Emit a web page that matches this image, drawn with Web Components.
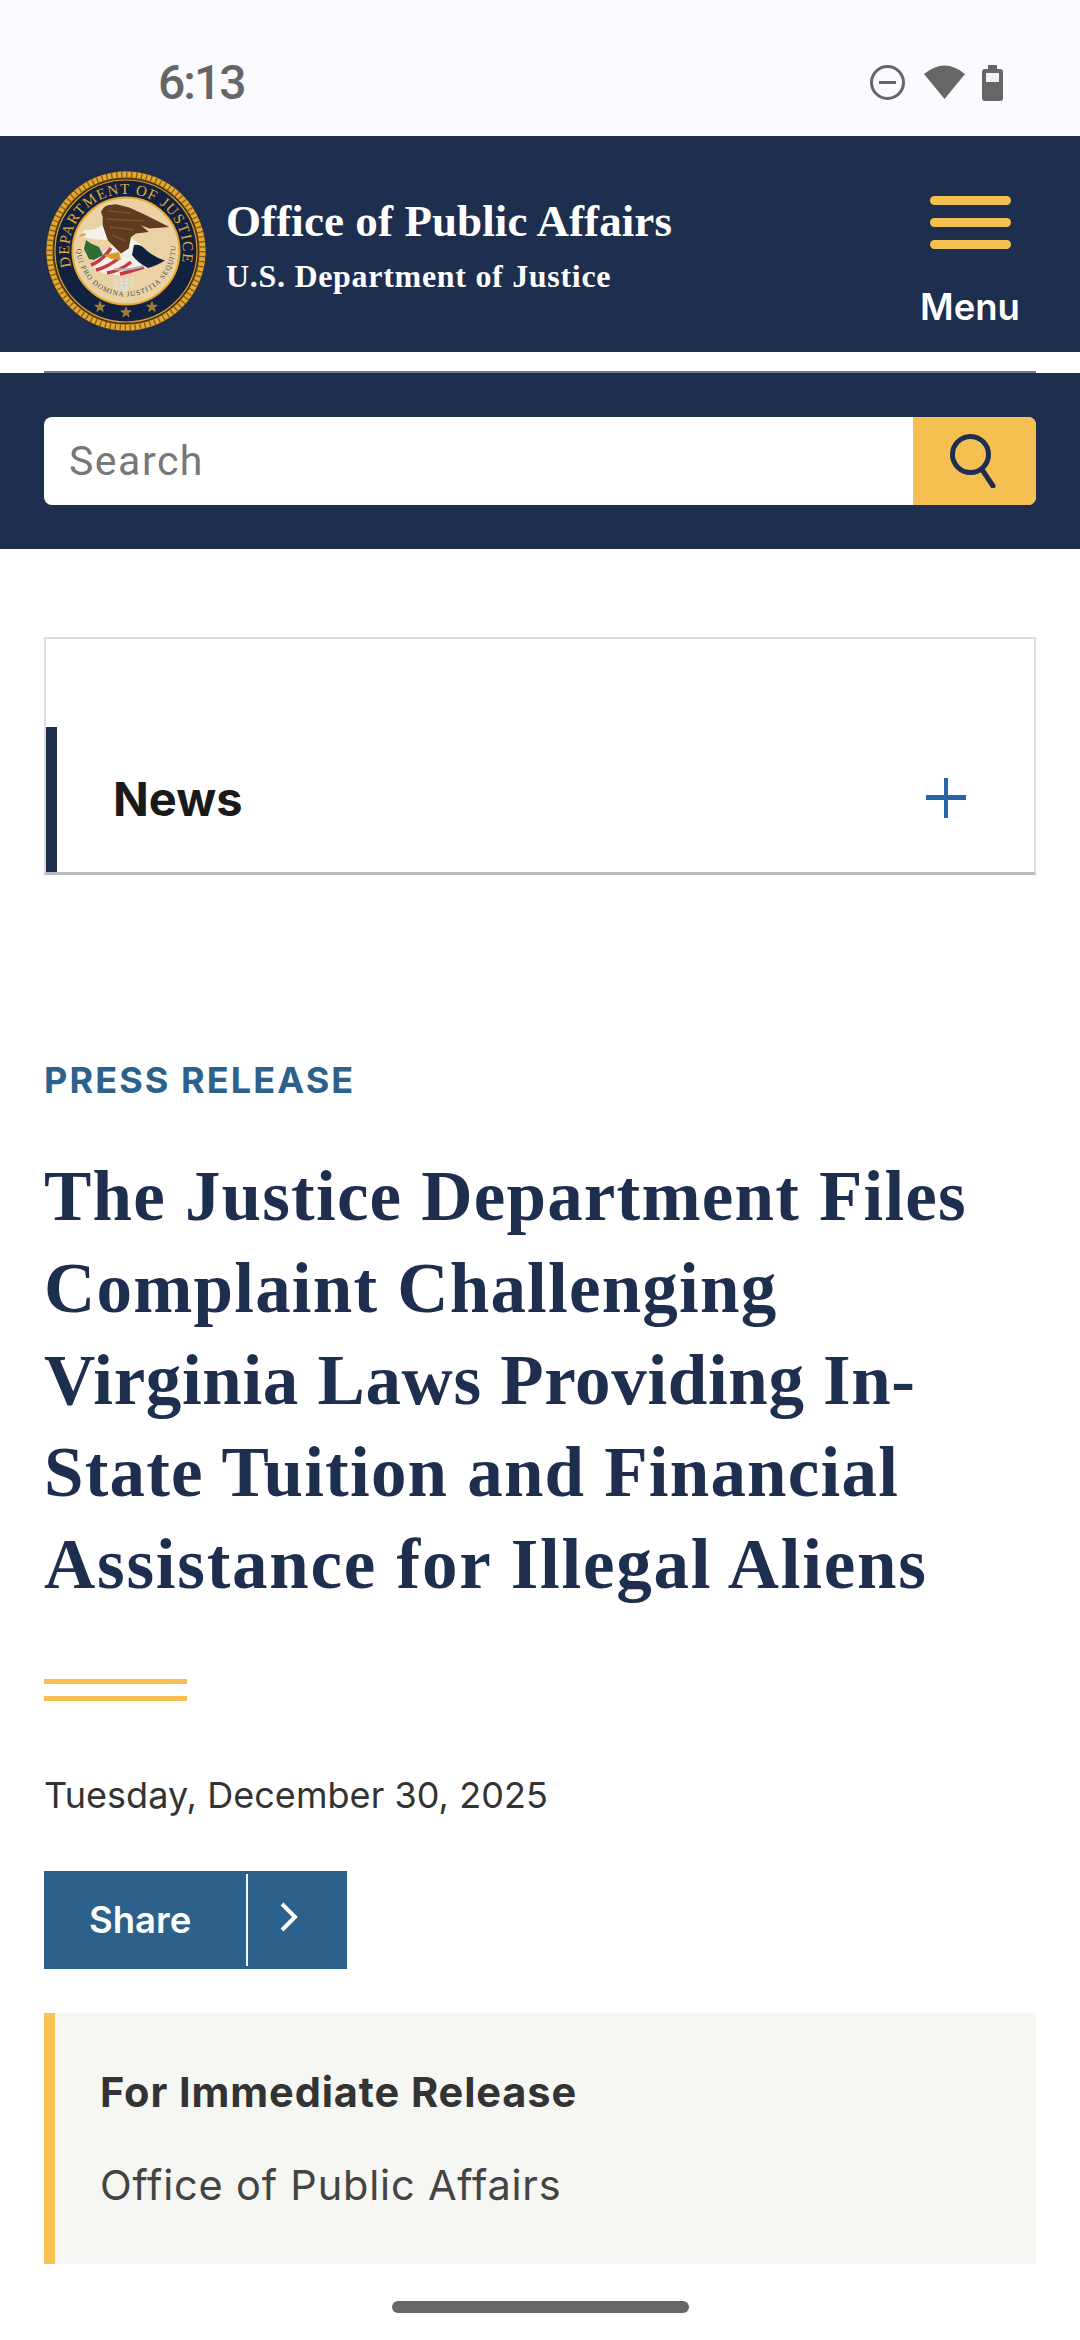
<!DOCTYPE html>
<html lang="en">
<head>
<meta charset="utf-8">
<title>Office of Public Affairs</title>
<style>
  html, body { margin: 0; padding: 0; background: #fff; }
  body { width: 1080px; height: 2340px; overflow: hidden; font-family: Inter, "Liberation Sans", sans-serif; }
</style>
</head>
<body>
<status-bar></status-bar>
<site-header></site-header>
<search-band></search-band>
<nav-card label="News"></nav-card>
<press-article>
  <span slot="kicker">PRESS RELEASE</span>
  <span slot="title">The Justice Department Files<br>Complaint Challenging<br><span style="letter-spacing:.65px">Virginia Laws Providing In-</span><br>State Tuition and Financial<br><span style="letter-spacing:1.75px">Assistance for Illegal Aliens</span></span>
  <span slot="date">Tuesday, December 30, 2025</span>
</press-article>
<share-button></share-button>
<release-box></release-box>
<home-pill></home-pill>

<script>
class StatusBar extends HTMLElement {
  constructor() {
    super();
    this.attachShadow({ mode: 'open' }).innerHTML = `
      <style>
        :host { display: flex; height: 136px; box-sizing: border-box; background: #fafaff; align-items: flex-start; padding: 0 77px 0 158px; justify-content: space-between; }
        .time { font: 500 48px/48px Roboto, sans-serif; color: #666; margin-top: 59px; letter-spacing: -2px; }
        svg { display: block; margin-top: 65px; }
      </style>
      <span class="time">6:13</span>
      <svg width="133" height="36" viewBox="0 0 133 36" fill="#666">
        <circle cx="17.500" cy="17.500" r="16" fill="none" stroke="#666" stroke-width="3"/>
        <rect x="9" y="16" width="17" height="3"/>
        <path d="M54 9 Q74.500 -8 95 9 L74.500 34 Z"/>
        <path d="M118 0 h9 v4 h3 q3 0 3 3 v26 q0 3-3 3 h-15 q-3 0-3-3 v-26 q0-3 3-3 h3z"/>
        <rect x="116" y="8" width="13" height="9" fill="#f2f2f6"/>
      </svg>`;
  }
}
customElements.define('status-bar', StatusBar);

class DojSeal extends HTMLElement {
  constructor() {
    super();
    const star = 'M0-5.500 L1.300-1.700 5.200-1.700 2.100.6 3.200 4.400 0 2.100-3.200 4.400-2.100.6-5.200-1.700-1.300-1.700Z';
    this.attachShadow({ mode: 'open' }).innerHTML = `
      <style>
        :host { display: block; width: 160px; height: 160px; flex: none; }
        svg { display: block; overflow: visible; }
        text { font-family: "Liberation Serif", serif; }
      </style>
      <svg width="160" height="160" viewBox="0 0 160 160">
        <defs>
          <path id="top" d="M25.200 95.500 A57 57 0 1 1 134.800 95.500"/>
          <path id="motto" d="M30.500 76 A49.500 49.500 0 1 0 129.500 76"/>
        </defs>
        <circle cx="80" cy="80" r="80" fill="#5a3d12"/>
        <circle cx="80" cy="80" r="76.500" fill="none" stroke="#e3a832" stroke-width="6"/>
        <circle cx="80" cy="80" r="76.500" fill="none" stroke="#8a5f18" stroke-width="6" stroke-dasharray="1.400 3.600"/>
        <circle cx="80" cy="80" r="72.500" fill="#3a2c16"/>
        <circle cx="80" cy="80" r="71" fill="#12213f" stroke="#d89f34" stroke-width="1.200"/>
        <text font-size="15" fill="#e2aa3c" letter-spacing="1.100"><textPath href="#top">DEPARTMENT OF JUSTICE</textPath></text>
        <circle cx="80" cy="80" r="53.500" fill="#ead2a4" stroke="#e6a92f" stroke-width="2"/>
        <!-- shield -->
        <path d="M45 94 Q52 84 66 74 L80 80 L100 90 L102 96 Q86 104 70 104 Q54 104 45 94Z" fill="#f4eee6"/>
        <path d="M45 94 Q56 90 65 77 M50 99 Q62 96 73 87 M61 102 Q74 100 85 91 M74 103 Q86 100 98 96" stroke="#c23a43" stroke-width="3.500" fill="none"/>
        <!-- white tail feathers and dark tail -->
        <path d="M84 66 Q90 70 95 74 L100 81 L118 89 L102 94 Q90 88 78 83Z" fill="#f4f1ea"/>
        <path d="M88 74 Q95 73 100 79 Q108 86 119 89.500 Q110 95 102 97 Q92 92 86 84Z" fill="#10203e"/>
        <!-- wing and body -->
        <path d="M56.700 46 L55 41 Q57 36 61.700 34.300 L70 33.300 L83.300 36.600 L100 44.300 L123.300 56 L103.300 57.600 L95 54.300 L102.700 61 L90 62.600 L85 66 L82.700 77.600 L75 82.600 L65 72.600 L61.700 69.300 L56.700 56Z" fill="#5f3c20"/>
        <path d="M62 40 L84 42 M60 48 L98 50 M64 56 L88 59 M66 64 L80 70" stroke="#7a5630" stroke-width="1.400" fill="none"/>
        <!-- head -->
        <path d="M33.300 64.300 L38.300 59.300 L48.300 58.600 L56.700 54.300 L61.700 69.300 L48.300 68.300 L38.300 66Z" fill="#f5f2ea"/>
        <path d="M33 66 Q34 62 39 62 L40 65 Q36 64.500 33 66Z" fill="#e1a72f"/>
        <!-- branch, claws, arrows -->
        <path d="M40 69 L45 72.600 L53 76 L57 84 L48 89 L43 88 L38 78Z" fill="#2f6b35"/>
        <path d="M58 84 L73 81 L75 89 L65 88Z" fill="#d99a2a"/>
        <path d="M68 98 Q80 100 98 95" stroke="#b5b5b5" stroke-width="2" fill="none"/>
        <path d="M69 108 l2 12 M75 107 l1 14 M81 107 l-1 14 M87 106 l-2 12" stroke="#dedede" stroke-width="3.200" fill="none" stroke-dasharray="3 1"/>
        <text font-size="7.200" fill="#4b4b4b" letter-spacing="1"><textPath href="#motto" startOffset="2">QUI PRO DOMINA JUSTITIA SEQUITUR</textPath></text>
        <g fill="#9c7a36" stroke="#d8a63c" stroke-width=".5">
          <path d="${star}" transform="translate(54 136)"/>
          <path d="${star}" transform="translate(80 141.500)"/>
          <path d="${star}" transform="translate(106 136)"/>
        </g>
      </svg>`;
  }
}
customElements.define('doj-seal', DojSeal);

class SiteHeader extends HTMLElement {
  constructor() {
    super();
    this.attachShadow({ mode: 'open' }).innerHTML = `
      <style>
        :host { display: flex; height: 216px; background: #1d2e4f; box-sizing: border-box; padding: 35px 60px 0 46px; color: #fff; align-items: flex-start; }
        .names { flex: 1; padding: 22px 0 0 20px; font-family: "Liberation Serif", serif; font-weight: 700; }
        .a { font-size: 45px; line-height: 56px; white-space: nowrap; letter-spacing: .1px; }
        .b { font-size: 32px; line-height: 42px; white-space: nowrap; margin-top: 6px; letter-spacing: .7px; }
        .menu { width: 100px; display: flex; flex-direction: column; align-items: center; padding-top: 25px; }
        .bar { width: 81px; height: 9px; border-radius: 5px; background: #f5c051; margin-bottom: 13px; }
        .menu span { font: 600 36.500px/42px Inter, sans-serif; margin-top: 24px; }
      </style>
      <doj-seal></doj-seal>
      <div class="names"><div class="a">Office of Public Affairs</div><div class="b">U.S. Department of Justice</div></div>
      <div class="menu"><div class="bar"></div><div class="bar"></div><div class="bar"></div><span>Menu</span></div>`;
  }
}
customElements.define('site-header', SiteHeader);

class SearchBand extends HTMLElement {
  constructor() {
    super();
    this.attachShadow({ mode: 'open' }).innerHTML = `
      <style>
        :host { display: block; }
        .gap { height: 21px; margin: 0 44px; box-sizing: border-box; border-bottom: 2px solid #6f7a8c; }
        .band { background: #1d2e4f; height: 176px; box-sizing: border-box; padding: 44px; }
        .field { display: flex; height: 88px; background: #fff; border-radius: 8px; overflow: hidden; }
        .ph { flex: 1; font: 400 41px/88px Roboto, sans-serif; color: #777; padding-left: 25px; letter-spacing: 1.500px; }
        .btn { width: 123px; background: #f5c051; display: flex; align-items: center; justify-content: center; padding-right: 3px; box-sizing: border-box; }
        svg { display: block; }
      </style>
      <div class="gap"></div>
      <div class="band">
        <div class="field">
          <div class="ph">Search</div>
          <div class="btn"><svg width="46" height="54" viewBox="0 0 46 54" fill="none" stroke="#1d2e4f" stroke-width="5"><circle cx="20.500" cy="20.500" r="18"/><path d="M33 37 L43 52" stroke-linecap="round"/></svg></div>
        </div>
      </div>`;
  }
}
customElements.define('search-band', SearchBand);

class NavCard extends HTMLElement {
  constructor() {
    super();
    this.attachShadow({ mode: 'open' }).innerHTML = `
      <style>
        :host { display: block; margin: 88px 44px 0; height: 238px; box-sizing: border-box; border: 2px solid #dcdcdc; border-bottom: 3px solid #bbb; }
        .row { margin-top: 88px; height: 145px; border-left: 11px solid #1d2e4f; display: flex; align-items: center; justify-content: space-between; padding: 0 68px 3px 56px; box-sizing: border-box; }
        b { font: 700 47px/1 Inter, sans-serif; color: #1a1a1a; }
        svg { display: block; }
      </style>
      <div class="row"><b>${this.getAttribute('label')}</b>
      <svg width="40" height="40" viewBox="0 0 40 40" fill="#2a63a8"><rect y="17" width="40" height="5"/><rect x="18" width="4" height="40"/></svg></div>`;
  }
}
customElements.define('nav-card', NavCard);

class PressArticle extends HTMLElement {
  constructor() {
    super();
    this.attachShadow({ mode: 'open' }).innerHTML = `
      <style>
        :host { display: block; padding: 0 44px; }
        .kicker { margin-top: 184px; font: 700 36px/42px Inter, sans-serif; color: #2b618b; letter-spacing: 2.100px; }
        h1 { margin: 49px 0 0; font: 700 71px/92px "Liberation Serif", serif; color: #1d2e4f; white-space: nowrap; letter-spacing: 1.200px; }
        .rule { width: 143px; height: 22px; box-sizing: border-box; border-top: 5px solid #f5c051; border-bottom: 5px solid #f5c051; margin-top: 69px; }
        .date { margin-top: 73px; font: 400 36px/42px Inter, sans-serif; color: #333; letter-spacing: .05px; }
      </style>
      <div class="kicker"><slot name="kicker"></slot></div>
      <h1><slot name="title"></slot></h1>
      <div class="rule"></div>
      <div class="date"><slot name="date"></slot></div>`;
  }
}
customElements.define('press-article', PressArticle);

class ShareButton extends HTMLElement {
  constructor() {
    super();
    this.attachShadow({ mode: 'open' }).innerHTML = `
      <style>
        :host { display: block; margin: 55px 0 0 44px; width: 303px; height: 98px; }
        .b { display: flex; height: 98px; background: #2b618b; color: #fff; align-items: center; }
        .t { width: 202px; box-sizing: border-box; padding-left: 45px; font: 600 36.500px/1 Inter, sans-serif; }
        .d { width: 2px; height: 92px; background: #fff; }
        svg { display: block; margin: -6px 0 0 32px; }
      </style>
      <div class="b"><span class="t">Share</span><span class="d"></span>
      <svg width="18" height="30" viewBox="0 0 18 30" fill="none" stroke="#fff" stroke-width="4"><path d="M2 2 L15 15 L2 28"/></svg></div>`;
  }
}
customElements.define('share-button', ShareButton);

class ReleaseBox extends HTMLElement {
  constructor() {
    super();
    this.attachShadow({ mode: 'open' }).innerHTML = `
      <style>
        :host { display: block; margin: 44px 44px 0; height: 251px; box-sizing: border-box; background: #f6f6f2; border-left: 11px solid #f8c254; padding: 55px 0 0 45px; }
        .a { font: 700 41.500px/48px Inter, sans-serif; color: #333; letter-spacing: .9px; }
        .b { margin-top: 45px; font: 400 41.500px/48px Inter, sans-serif; color: #444; letter-spacing: .8px; }
      </style>
      <div class="a">For Immediate Release</div>
      <div class="b">Office of Public Affairs</div>`;
  }
}
customElements.define('release-box', ReleaseBox);

class HomePill extends HTMLElement {
  constructor() {
    super();
    this.attachShadow({ mode: 'open' }).innerHTML = `
      <style>
        :host { display: block; margin: 37px auto 0; width: 297px; height: 12px; border-radius: 6px; background: #666; }
      </style>`;
  }
}
customElements.define('home-pill', HomePill);
</script>
</body>
</html>
